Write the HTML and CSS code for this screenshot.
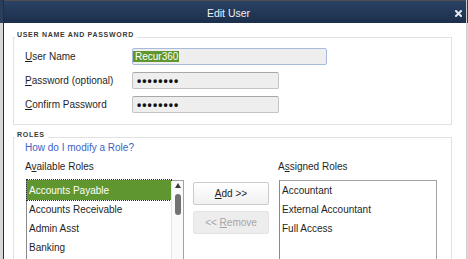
FILE: index.html
```html
<!DOCTYPE html>
<html lang="en">

<head>
    <meta charset="UTF-8">
    <meta name="viewport" content="width=device-width, initial-scale=1.0">
    <title>Edit User</title>
    <link rel="stylesheet" href="styles.css">
</head>

<body>
    <div class="dialog">
        <div class="titlebar">
            <span class="title">Edit User</span>
            <span class="close" aria-label="Close">
                <svg width="7" height="7" viewBox="0 0 7 7">
                    <path d="M1 1 L6 6 M6 1 L1 6" stroke="#e4e8ee" stroke-width="2" stroke-linecap="square" />
                </svg>
            </span>
        </div>

        <!-- Username and password -->
        <fieldset class="group group-user">
            <legend>USER NAME AND PASSWORD</legend>
            <div class="form-grid">
                <label><u>U</u>ser Name</label>
                <div class="field field-wide field-focus"><span class="selected">Recur360</span></div>

                <label><u>P</u>assword (optional)</label>
                <div class="field field-short"><span class="dots">••••••••</span></div>

                <label><u>C</u>onfirm Password</label>
                <div class="field field-short"><span class="dots">••••••••</span></div>
            </div>
        </fieldset>

        <!-- Roles -->
        <fieldset class="group group-roles">
            <legend>ROLES</legend>
            <div class="group-body">
                <a class="help-link" href="#">How do I modify a Role?</a>
                <div class="roles-grid">
                    <div class="col-label">A<u>v</u>ailable Roles</div>
                    <div></div>
                    <div class="col-label">A<u>s</u>signed Roles</div>

                    <div class="listbox">
                        <ul class="items">
                            <li class="active">Accounts Payable</li>
                            <li>Accounts Receivable</li>
                            <li>Admin Asst</li>
                            <li>Banking</li>
                        </ul>
                        <div class="scrollbar">
                            <span class="arrow"></span>
                            <span class="thumb"></span>
                        </div>
                    </div>

                    <div class="buttons">
                        <button class="btn"><u>A</u>dd &gt;&gt;</button>
                        <button class="btn" disabled>&lt;&lt; <u>R</u>emove</button>
                    </div>

                    <div class="listbox">
                        <ul class="items">
                            <li>Accountant</li>
                            <li>External Accountant</li>
                            <li>Full Access</li>
                        </ul>
                    </div>
                </div>
            </div>
        </fieldset>
    </div>
</body>

</html>
```

FILE: styles.css
```css
:root {
    --title: #233a5b;
    --title-dark: #1c2f4c;
    --green: #5f962f;
    --text: #1f1f1f;
    --line: #e2e2e2;
    --link: #3c5fc6;
}

body {
    margin: 0;
    padding: 0;
    height: 259px;
    font-family: 'Liberation Sans', Arial, sans-serif;
    font-size: 10px;
    color: var(--text);
    background: linear-gradient(#2a3d59 0, #2a3d59 23px, #d7d7d7 23px);
    overflow: hidden;
}

.dialog {
    margin-left: 3px;
    width: 462px;
    height: 259px;
    background-color: #fff;
    border-left: 1px solid var(--title-dark);
    border-right: 1px solid #cfcfcf;
    overflow: hidden;
}

.titlebar {
    display: flex;
    align-items: center;
    height: 20px;
    padding-top: 2px;
    border-top: 1px solid #4f4f4f;
    background: linear-gradient(#2a4264, var(--title-dark));
    color: #eef1f5;
    margin-left: -1px;
    margin-right: -1px;
    padding-left: 1px;
}

.title {
    flex: 1;
    text-align: center;
    font-size: 10.5px;
}

.close {
    display: flex;
    padding: 0 5px 0 2px;
}

/* Group boxes */
.group {
    margin: 0 14px 0 9px;
    padding: 4px 0 11px 0;
    border: 1px solid var(--line);
    min-width: 0;
}

.group legend {
    margin-left: 1px;
    padding: 0 3px 5px 2px;
    font-size: 7px;
    line-height: 8px;
    font-weight: bold;
    letter-spacing: 0.7px;
    color: #3a3a3a;
}

.group-user {
    margin-top: 8px;
}

.group-roles {
    margin-top: 6px;
    padding-top: 0;
    padding-bottom: 0;
    border-bottom: none;
    height: 140px;
}

.form-grid {
    display: grid;
    grid-template-columns: 107px auto;
    row-gap: 7px;
    align-items: center;
    padding: 0 11px;
}

label {
    line-height: 17px;
}

.field {
    height: 15px;
    box-sizing: content-box;
    background-color: #eeeeee;
    border: 1px solid #c4c4c4;
    border-top-color: #a9a9a9;
    border-radius: 2px;
    display: flex;
    align-items: center;
    padding-left: 1px;
}

.field-wide {
    width: 193px;
}

.field-short {
    width: 144px;
}

.field-focus {
    border-color: #a8bbdc;
    padding-left: 0;
}

.selected {
    background-color: var(--green);
    color: #fff;
    line-height: 11px;
    padding: 0 1px 0 2px;
}

.dots {
    padding-left: 3px;
    font-size: 12px;
    line-height: 12px;
    letter-spacing: 1.1px;
    font-weight: bold;
    color: #111;
}

/* Roles */
.group-body {
    padding: 0 11px;
}

.help-link {
    display: block;
    margin-top: -3px;
    line-height: 13px;
    color: var(--link);
    text-decoration: none;
}

.roles-grid {
    display: grid;
    grid-template-columns: 159px 76px 159px;
    column-gap: 9px;
    row-gap: 7px;
    margin-top: 6px;
}

.col-label {
    line-height: 13px;
}

.listbox {
    margin-left: 1px;
    height: 90px;
    border: 1px solid #a3a3a3;
    border-left-color: #8a8a8a;
    display: flex;
    background-color: #fff;
}

.items {
    flex: 1;
    list-style: none;
    margin: 0;
    padding: 0;
}

.items li {
    height: 19px;
    line-height: 19px;
    padding-left: 2px;
    white-space: nowrap;
}

.items li.active {
    background-color: var(--green);
    color: #fff;
    outline: 1px dotted #2b2b2b;
    outline-offset: 0;
    margin-top: -1px;
    padding-top: 1px;
}

.scrollbar {
    width: 11px;
    border-left: 1px solid #e4e4e4;
    background-color: #fafafa;
    display: flex;
    flex-direction: column;
    align-items: center;
    padding-top: 2px;
}

.arrow {
    width: 0;
    height: 0;
    border-left: 3px solid transparent;
    border-right: 3px solid transparent;
    border-bottom: 5px solid #3a3a3a;
}

.thumb {
    margin-top: 6px;
    width: 6px;
    height: 21px;
    border-radius: 3px;
    background-color: #727272;
}

.buttons {
    display: flex;
    flex-direction: column;
    gap: 6px;
    padding-top: 2px;
}

.btn {
    height: 23px;
    width: 76px;
    padding: 0;
    font-family: inherit;
    font-size: 10px;
    color: var(--text);
    background: linear-gradient(#ffffff, #f1f1f1);
    border: 1px solid #cbcbcb;
    border-radius: 2px;
}

.btn:disabled {
    color: #a6a6a6;
    background: #ededed;
    border-color: #e3e3e3;
}
```
